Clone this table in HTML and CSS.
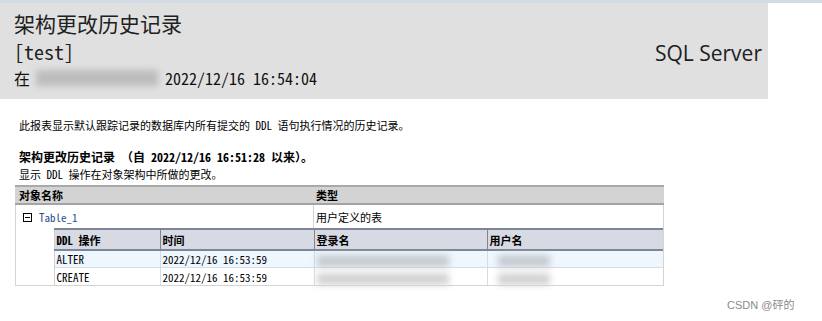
FILE: index.html
```html
<!DOCTYPE html>
<html lang="zh">
<head>
<meta charset="utf-8">
<link rel="stylesheet" href="styles.css">
</head>
<body>
<div class="topstrip"></div>
<div class="banner">
  <div class="banner-left">
    <div class="title">架构更改历史记录</div>
    <div class="db">[test]</div>
    <div class="when">在<span class="blur blur-head"></span>2022/12/16 16:54:04</div>
  </div>
  <div class="product">SQL Server</div>
</div>
<div class="content">
  <p class="desc">此报表显示默认跟踪记录的数据库内所有提交的 DDL 语句执行情况的历史记录。</p>
  <p class="section">架构更改历史记录 （自 2022/12/16 16:51:28 以来）。</p>
  <p class="sub">显示 DDL 操作在对象架构中所做的更改。</p>
  <table class="outer">
    <colgroup><col class="c-name"><col class="c-type"></colgroup>
    <tr class="outer-head"><th>对象名称</th><th class="sep">类型</th></tr>
    <tr class="obj-row"><td><span class="toggle"></span><span class="objname">Table_1</span></td><td class="sep">用户定义的表</td></tr>
    <tr>
      <td colspan="2" class="nest-cell">
        <table class="inner">
          <colgroup><col class="i-pad"><col class="i-op"><col class="i-time"><col class="i-login"><col class="i-user"></colgroup>
          <tr class="inner-head"><td class="pad"></td><th>DDL 操作</th><th>时间</th><th>登录名</th><th>用户名</th></tr>
          <tr class="alt"><td class="pad"></td><td>ALTER</td><td>2022/12/16 16:53:59</td><td><span class="blur blur-login"></span></td><td><span class="blur blur-user"></span></td></tr>
          <tr class="plain"><td class="pad"></td><td>CREATE</td><td>2022/12/16 16:53:59</td><td><span class="blur blur-login"></span></td><td><span class="blur blur-user"></span></td></tr>
        </table>
      </td>
    </tr>
  </table>
</div>
<div class="watermark">CSDN @砰的</div>
</body>
</html>
```

FILE: styles.css
```css
html, body {
  margin: 0;
  padding: 0;
  background: #ffffff;
}
body {
  width: 822px;
  height: 321px;
  overflow: hidden;
  position: relative;
  font-family: "Noto Sans Mono CJK SC", "Noto Sans CJK SC", "Liberation Mono", monospace;
  color: #000;
}
.topstrip {
  height: 3px;
  background: #d3dbe7;
}
.banner {
  width: 768px;
  height: 96px;
  background: #e0e0e0;
  display: flex;
  justify-content: space-between;
  box-sizing: border-box;
  padding: 6px 6px 0 14px;
}
.banner-left {
  display: flex;
  flex-direction: column;
}
.title {
  font-size: 21px;
  line-height: 28px;
  color: #202020;
}
.db {
  font-size: 20px;
  line-height: 26px;
  margin-top: 2px;
  color: #202020;
}
.when {
  font-size: 16px;
  line-height: 22px;
  margin-top: 2px;
  color: #101010;
  display: flex;
  align-items: center;
}
.blur {
  display: inline-block;
  background: #b8b8b8;
  filter: blur(3px);
}
.blur-head {
  width: 122px;
  height: 16px;
  margin: 0 7px 0 6px;
  background: #bdbdbd;
}
.product {
  font-family: "Open Sans", "Noto Sans", sans-serif;
  font-size: 21px;
  line-height: 26px;
  margin-top: 31px;
  color: #202020;
}
.content {
  padding: 19px 0 0 15px;
}
.desc, .section, .sub {
  margin: 0;
  padding-left: 4px;
}
.desc {
  font-size: 11px;
  line-height: 14px;
}
.section {
  font-size: 12px;
  line-height: 16px;
  font-weight: bold;
  margin-top: 17px;
}
.sub {
  font-size: 11px;
  line-height: 14px;
  margin-top: 2px;
}
.outer {
  margin-top: 4px;
  width: 649px;
  border-collapse: collapse;
  font-size: 11px;
  border: 1px solid #d4d4d4;
}
.c-name { width: 298px; }
.outer th, .outer td {
  padding: 0;
  text-align: left;
  vertical-align: middle;
}
.outer-head th {
  background: #d3d3d3;
  border-top: 2px solid #a9a9a9;
  border-bottom: 2px solid #a4a4a4;
  height: 16px;
  padding-left: 3px;
  font-weight: bold;
  font-size: 11px;
}
.outer .sep {
  border-left: 1px solid #d4d4d4;
  padding-left: 2px;
}
.obj-row td {
  height: 23px;
  background: #fff;
}
.obj-row td:first-child {
  padding-left: 7px;
}
.toggle {
  display: inline-block;
  width: 7px;
  height: 7px;
  border: 1px solid #000;
  position: relative;
  vertical-align: middle;
  margin-right: 7px;
  top: -1px;
}
.toggle::after {
  content: "";
  position: absolute;
  left: 1px;
  right: 1px;
  top: 3px;
  height: 1px;
  background: #000;
}
.objname {
  color: #2a4d8f;
}
.nest-cell {
  padding: 0 !important;
}
.inner {
  width: 100%;
  border-collapse: collapse;
  font-size: 11px;
}
.i-pad { width: 38px; }
.i-op { width: 106px; }
.i-time { width: 154px; }
.i-login { width: 173px; }
.inner th, .inner td {
  padding: 0 0 0 2px;
  text-align: left;
  vertical-align: middle;
}
.inner td.pad {
  background: #fff;
  border-right: 1px solid #d0d0d0;
}
.inner-head th {
  background: #d7dae2;
  border-top: 2px solid #7b8798;
  border-bottom: 2px solid #7b8798;
  border-left: 1px solid #7b8798;
  height: 19px;
  font-weight: bold;
}
.inner-head th:nth-child(2) {
  border-left: none;
}
.alt td:not(.pad) {
  background: #eef6fe;
  height: 16px;
  border-bottom: 1px solid #d6dce4;
  border-left: 1px solid #d6dce4;
}
.plain td:not(.pad) {
  background: #ffffff;
  height: 17px;
  border-left: 1px solid #d6dce4;
}
.alt td:nth-child(2), .plain td:nth-child(2) {
  border-left: none;
}
.blur-login {
  width: 132px;
  height: 12px;
  background: #c8ccd2;
  vertical-align: middle;
}
.blur-user {
  width: 52px;
  height: 12px;
  margin-left: 8px;
  background: #c8ccd2;
  vertical-align: middle;
}
.plain .blur-login, .plain .blur-user {
  background: #d4d4d4;
}
.watermark {
  position: absolute;
  left: 727px;
  top: 296px;
  font-family: "Liberation Sans", "Noto Sans CJK SC", sans-serif;
  font-size: 11px;
  color: #8a8a8a;
}
```
